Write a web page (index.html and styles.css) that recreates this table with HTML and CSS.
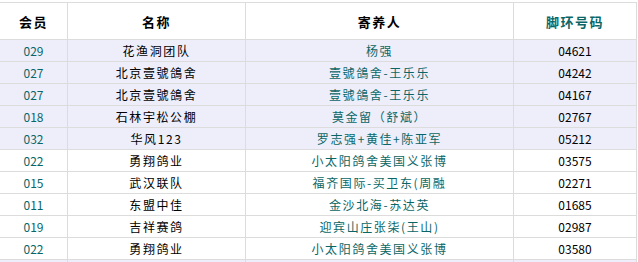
FILE: index.html
```html
<!DOCTYPE html>
<html lang="zh-CN">
<head>
<meta charset="utf-8">
<title>寄养名单</title>
<link rel="stylesheet" href="styles.css">
</head>
<body>
<div class="frame">
<div class="list">
  <div class="row head">
    <div class="cell">会员</div>
    <div class="cell">名称</div>
    <div class="cell">寄养人</div>
    <div class="cell ring">脚环号码</div>
  </div>
  <div class="row alt">
    <div class="cell num">029</div><div class="cell name">花渔洞团队</div><div class="cell owner">杨强</div><div class="cell code">04621</div>
  </div>
  <div class="row alt">
    <div class="cell num">027</div><div class="cell name">北京壹號鴿舍</div><div class="cell owner">壹號鴿舍-王乐乐</div><div class="cell code">04242</div>
  </div>
  <div class="row alt">
    <div class="cell num">027</div><div class="cell name">北京壹號鴿舍</div><div class="cell owner">壹號鴿舍-王乐乐</div><div class="cell code">04167</div>
  </div>
  <div class="row alt">
    <div class="cell num">018</div><div class="cell name">石林宇松公棚</div><div class="cell owner">莫金留（舒斌）</div><div class="cell code">02767</div>
  </div>
  <div class="row alt">
    <div class="cell num">032</div><div class="cell name">华风123</div><div class="cell owner">罗志强+黄佳+陈亚军</div><div class="cell code">05212</div>
  </div>
  <div class="row">
    <div class="cell num">022</div><div class="cell name">勇翔鸽业</div><div class="cell owner">小太阳鸽舍美国义张博</div><div class="cell code">03575</div>
  </div>
  <div class="row">
    <div class="cell num">015</div><div class="cell name">武汉联队</div><div class="cell owner">福齐国际-买卫东(周融</div><div class="cell code">02271</div>
  </div>
  <div class="row">
    <div class="cell num">011</div><div class="cell name">东盟中佳</div><div class="cell owner">金沙北海-苏达英</div><div class="cell code">01685</div>
  </div>
  <div class="row">
    <div class="cell num">019</div><div class="cell name">吉祥赛鸽</div><div class="cell owner">迎宾山庄张柒(王山)</div><div class="cell code">02987</div>
  </div>
  <div class="row">
    <div class="cell num">022</div><div class="cell name">勇翔鸽业</div><div class="cell owner">小太阳鸽舍美国义张博</div><div class="cell code">03580</div>
  </div>
  <div class="row alt">
    <div class="cell num"></div><div class="cell name"></div><div class="cell owner"></div><div class="cell code"></div>
  </div>
</div>
</div>
</body>
</html>
```

FILE: styles.css
```css
html, body {
  margin: 0;
  padding: 0;
  background: #ffffff;
  overflow: hidden;
}
body {
  font-family: "Noto Sans CJK SC", "Noto Sans", sans-serif;
  font-size: 12px;
  color: #000;
}
.frame {
  height: 262px;
  overflow: hidden;
}
.list {
  margin-top: 2px;
  width: 637px;
  border-top: 1px solid #dcdcdc;
}
.row {
  display: grid;
  grid-template-columns: 68px 178px 268px 123px;
  height: 22px;
  box-sizing: border-box;
  border-bottom: 1px solid #dcdcdc;
  background: #ffffff;
}
.row.alt {
  background: #eeeefb;
}
.row.head {
  height: 37px;
}
.cell {
  box-sizing: border-box;
  border-right: 1px solid #dcdcdc;
  display: flex;
  align-items: center;
  justify-content: center;
  white-space: nowrap;
  overflow: visible;
  line-height: 1;
}
.head .cell {
  font-weight: bold;
  font-size: 13px;
  letter-spacing: 1.5px;
  color: #000;
}
.head .cell.ring {
  color: #0a6666;
}
.num {
  color: #0a6666;
}
.name {
  letter-spacing: 1.6px;
}
.owner {
  color: #0a6666;
  letter-spacing: 1.6px;
}
.code {
  color: #000;
}
```
